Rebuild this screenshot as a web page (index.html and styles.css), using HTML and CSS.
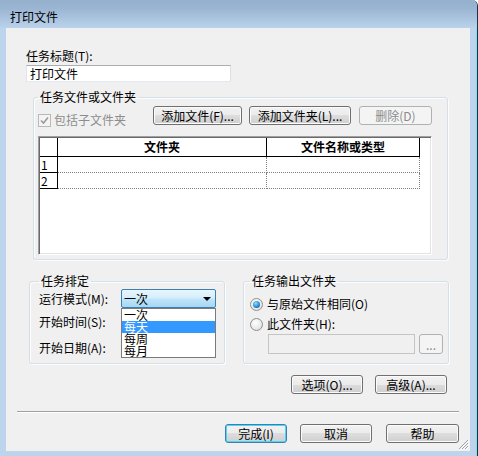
FILE: index.html
```html
<!DOCTYPE html>
<html lang="zh-CN">
<head>
    <meta charset="UTF-8">
    <title>打印文件</title>
    <link rel="stylesheet" href="styles.css">
</head>
<body>

<div class="window">
    <div class="titlebar">打印文件</div>

    <div class="client">
        <label class="field-label" for="taskTitle">任务标题(T):</label>
        <input type="text" id="taskTitle" class="text-input title-input" value="打印文件">

        <fieldset class="group files-group">
            <legend>任务文件或文件夹</legend>
            <div class="files-toolbar">
                <label class="check disabled">
                    <span class="check-box">
                        <svg width="9" height="9" viewBox="0 0 9 9"><path d="M1 4.5 L3.5 7 L8 1.5" fill="none" stroke="#9a9a9a" stroke-width="1.6"/></svg>
                    </span>
                    包括子文件夹
                </label>
                <div class="toolbar-buttons">
                    <button class="btn btn-add-file">添加文件(F)...</button>
                    <button class="btn btn-add-folder">添加文件夹(L)...</button>
                    <button class="btn btn-delete" disabled>删除(D)</button>
                </div>
            </div>

            <div class="grid-frame">
                <div class="grid">
                    <div class="cell corner"></div>
                    <div class="cell head">文件夹</div>
                    <div class="cell head">文件名称或类型</div>
                    <div class="cell rownum">1</div>
                    <div class="cell data"></div>
                    <div class="cell data"></div>
                    <div class="cell rownum">2</div>
                    <div class="cell data"></div>
                    <div class="cell data"></div>
                </div>
            </div>
        </fieldset>

        <div class="groups-row">
            <fieldset class="group schedule-group">
                <legend>任务排定</legend>
                <div class="form-row row-mode">
                    <span class="row-label">运行模式(M):</span>
                    <div class="combo open">
                        <span class="combo-value">一次</span>
                        <span class="combo-arrow"></span>
                        <ul class="combo-list">
                            <li>一次</li>
                            <li class="selected">每天</li>
                            <li>每周</li>
                            <li>每月</li>
                        </ul>
                    </div>
                </div>
                <div class="form-row row-time">
                    <span class="row-label">开始时间(S):</span>
                </div>
                <div class="form-row row-date">
                    <span class="row-label">开始日期(A):</span>
                </div>
            </fieldset>

            <fieldset class="group output-group">
                <legend>任务输出文件夹</legend>
                <label class="radio radio-same checked"><span class="radio-dot"></span>与原始文件相同(O)</label>
                <label class="radio radio-folder"><span class="radio-dot"></span>此文件夹(H):</label>
                <div class="path-row">
                    <input type="text" class="text-input path-input" disabled>
                    <button class="btn btn-browse" disabled>...</button>
                </div>
            </fieldset>
        </div>

        <div class="button-row options-row">
            <button class="btn btn-wide">选项(O)...</button>
            <button class="btn btn-wide">高级(A)...</button>
        </div>

        <div class="separator"></div>

        <div class="button-row dialog-row">
            <button class="btn btn-default btn-finish">完成(I)</button>
            <button class="btn btn-cancel">取消</button>
            <button class="btn btn-help">帮助</button>
        </div>

        <svg class="grip" width="11" height="11" viewBox="0 0 11 11">
            <path d="M10 1 L1 10 M10 4 L4 10 M10 7 L7 10" stroke="#9aa3ad" stroke-width="1"/>
            <path d="M11 2 L2 11 M11 5 L5 11 M11 8 L8 11" stroke="#ffffff" stroke-width="1"/>
        </svg>
    </div>
</div>

</body>
</html>
```

FILE: styles.css
```css
* {
    box-sizing: border-box;
}

body {
    margin: 0;
    background: #ffffff;
    font-family: "Noto Sans CJK SC", "Noto Sans", sans-serif;
    font-size: 12px;
    color: #000;
}

.window {
    width: 478px;
    height: 456px;
    background: #bcd4ec;
    border-radius: 0 6px 0 0;
    border-right: 1px solid #1d3347;
    box-shadow: inset -1px 0 #7fe0f5;
    display: flex;
    flex-direction: column;
}

.titlebar {
    height: 28px;
    padding: 10px 0 0 10px;
    line-height: 14px;
    background: linear-gradient(#95b0cd 0, #9ab5d2 8px, #bad2eb 28px);
    border-radius: 0 6px 0 0;
}

.client {
    position: relative;
    margin-left: 6px;
    width: 464px;
    height: 423px;
    background: #f0f0f0;
    display: flex;
    flex-direction: column;
    align-items: flex-start;
}

.field-label {
    margin: 21px 0 0 20px;
    line-height: 14px;
}

.text-input {
    font-family: inherit;
    font-size: 12px;
    color: #000;
    border: 1px solid;
    border-color: #abadb3 #dbdfe6 #e3e9ef #e2e3ea;
    background: #fff;
    padding: 0 3px;
    margin: 0;
    outline: none;
}

.title-input {
    margin: 2px 0 0 20px;
    width: 205px;
    height: 17px;
    line-height: 15px;
}

/* group boxes */
.group {
    margin: 0;
    border: 1px solid #d5dfe5;
    border-radius: 3px;
    box-shadow: inset 1px 1px #fbfcfd, 1px 1px #fbfcfd;
    min-width: 0;
}

.group legend {
    padding: 0 2px;
    line-height: 14px;
}

.files-group {
    margin: 8px 0 0 27px;
    width: 415px;
    padding: 0 14px 4px 4px;
}

.files-toolbar {
    display: flex;
    align-items: flex-start;
    margin-top: 2px;
    padding-right: 1px;
}

.check {
    display: flex;
    align-items: center;
    margin-top: 7px;
    line-height: 14px;
}

.check.disabled {
    color: #8d8d8d;
}

.check-box {
    width: 13px;
    height: 13px;
    margin-right: 3px;
    border: 1px solid #b9b9b9;
    background: #f4f4f4;
    display: flex;
    align-items: center;
    justify-content: center;
}

.toolbar-buttons {
    display: flex;
    margin-left: auto;
}

/* buttons */
.btn {
    font-family: inherit;
    font-size: 12px;
    color: #000;
    height: 19px;
    padding: 0;
    line-height: 15px;
    border: 1px solid #707070;
    border-radius: 3px;
    background: linear-gradient(#f2f2f2 0%, #ebebeb 50%, #dddddd 50%, #cfcfcf 100%);
    box-shadow: inset 0 0 0 1px #fbfbfb;
    cursor: pointer;
}

.btn:disabled {
    color: #8b8b8b;
    border-color: #adb2b5;
    background: #f4f4f4;
    box-shadow: none;
}

.btn-add-file {
    width: 89px;
}

.btn-add-folder {
    width: 102px;
    margin-left: 7px;
}

.btn-delete {
    width: 73px;
    margin-left: 8px;
}

/* file list */
.grid-frame {
    margin-top: 9px;
    width: 394px;
    height: 119px;
    background: #fff;
    border: 1px solid;
    border-color: #a0a0a0 #ffffff #ffffff #a0a0a0;
    box-shadow: inset 1px 1px #696969, inset -1px -1px #e3e3e3;
    padding: 1px;
}

.grid {
    display: grid;
    grid-template-columns: 18px 209px 153px;
    grid-template-rows: 19px 16px 16px;
}

.cell {
    border-right: 1px dotted #808080;
    border-bottom: 1px dotted #808080;
}

.corner, .head, .rownum {
    border-right: 1px solid #000;
    border-bottom: 1px solid #000;
}

.head {
    font-weight: bold;
    text-align: center;
    line-height: 18px;
}

.rownum {
    padding-left: 1px;
    line-height: 15px;
}

/* lower groups */
.groups-row {
    display: flex;
    gap: 18px;
    margin: 14px 0 0 23px;
}

.schedule-group {
    width: 196px;
    padding: 1px 4px 5px 9px;
}

.form-row {
    display: flex;
    align-items: center;
    height: 20px;
}

.row-time {
    margin-top: 3px;
}

.row-date {
    margin-top: 6px;
}

.row-label {
    width: 82px;
    line-height: 14px;
}

.combo {
    position: relative;
    width: 95px;
    height: 19px;
    margin-top: -1px;
    border: 1px solid #3c7fb1;
    border-radius: 2px;
    background: linear-gradient(#e8f5fd 0%, #d6eefb 45%, #bde4fa 55%, #a6d6f2 100%);
    display: flex;
    align-items: center;
    padding: 0 4px 0 2px;
}

.combo-value {
    line-height: 14px;
}

.combo-arrow {
    margin-left: auto;
    width: 0;
    height: 0;
    border-left: 4px solid transparent;
    border-right: 4px solid transparent;
    border-top: 4px solid #000;
}

.combo-list {
    position: absolute;
    top: 18px;
    left: -1px;
    width: 95px;
    margin: 0;
    padding: 0;
    list-style: none;
    background: #fff;
    border: 1px solid #7a7a7a;
    z-index: 2;
}

.combo-list li {
    height: 12px;
    line-height: 12px;
    padding-left: 2px;
}

.combo-list li.selected {
    background: #3399ff;
    color: #fff;
}

.output-group {
    width: 206px;
    padding: 0 5px 9px 6px;
}

.radio {
    display: flex;
    align-items: center;
    line-height: 14px;
}

.radio-same {
    margin-top: 9px;
}

.radio-folder {
    margin-top: 6px;
}

.radio-dot {
    position: relative;
    width: 13px;
    height: 13px;
    margin-right: 4px;
    border-radius: 50%;
    border: 1px solid #8e8f8f;
    background: radial-gradient(circle at 40% 35%, #ffffff 0%, #e8e8e8 60%, #d2d2d2 100%);
}

.radio.checked .radio-dot::after {
    content: "";
    position: absolute;
    left: 2px;
    top: 2px;
    width: 7px;
    height: 7px;
    border-radius: 50%;
    background: radial-gradient(circle at 40% 35%, #8fe0ff 0%, #2a8ad4 55%, #0d4a86 100%);
}

.path-row {
    display: flex;
    margin: 3px 0 0 18px;
}

.path-input {
    width: 147px;
    height: 20px;
    background: #f0f0f0;
    border-color: #c5c5c5;
}

.btn-browse {
    width: 24px;
    height: 20px;
    margin-left: 4px;
}

/* dialog buttons */
.button-row {
    display: flex;
    align-self: flex-end;
}

.options-row {
    margin: 11px 23px 0 0;
    gap: 12px;
}

.btn-wide {
    width: 72px;
}

.separator {
    margin: 17px 0 0 11px;
    width: 442px;
    height: 2px;
    border-top: 1px solid #a0a0a0;
    border-bottom: 1px solid #ffffff;
}

.dialog-row {
    margin: 11px 11px 0 0;
}

.btn-default {
    border-color: #3c7fb1;
    box-shadow: inset 0 0 0 1px #48d7fb;
}

.btn-finish {
    width: 62px;
}

.btn-cancel {
    width: 72px;
    margin-left: 13px;
}

.btn-help {
    width: 73px;
    margin-left: 14px;
}

.grip {
    position: absolute;
    right: 1px;
    bottom: 1px;
}
```
